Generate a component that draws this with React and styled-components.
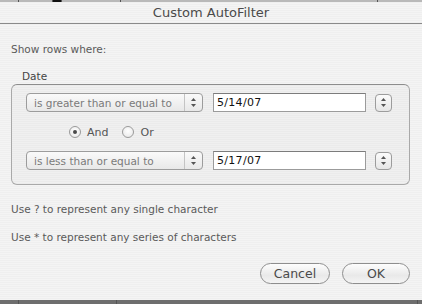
import React from 'react';
import styled, { createGlobalStyle } from 'styled-components';

const Global = createGlobalStyle`
  html, body { margin: 0; padding: 0; background: #6b6b6b; }
  body { font-family: "DejaVu Sans", "Liberation Sans", sans-serif; }
`;

const Screen = styled.div`
  width: 422px;
  height: 304px;
  overflow: hidden;
  display: flex;
  flex-direction: column;
  background: #6b6b6b;
`;

/* sheet rows peeking out behind the dialog */
const Behind = styled.div`
  height: 2px;
  flex: none;
  display: flex;
  background: #b9b9b9;
`;

const Cell = styled.div`
  width: ${p => p.w}px;
  flex: none;
  background: ${p => p.dark ? '#111' : 'transparent'};
  border-right: 1px solid #555;
`;

const Sheet = styled.div`
  flex: 1;
  display: flex;
  flex-direction: column;
  background: repeating-linear-gradient(#efefef 0 1px, #f4f4f4 1px 2px);
`;

const TitleBar = styled.div`
  height: 21px;
  flex: none;
  display: flex;
  align-items: center;
  justify-content: center;
  border-bottom: 1px solid #8a8a8a;
  font-size: 13px;
  color: #4a4a4a;
`;

const Body = styled.div`
  flex: 1;
  display: flex;
  flex-direction: column;
  padding: 19px 11px 0 11px;
  font-size: 10.5px;
  color: #5a5a5a;
`;

const Note = styled.div`
  margin-top: ${p => p.mt || 0}px;
  height: 13px;
  line-height: 13px;
`;

const Legend = styled.div`
  margin: 14px 0 1px 11px;
  height: 13px;
  line-height: 13px;
  color: #444;
`;

const Group = styled.div`
  width: 399px;
  height: 101px;
  box-sizing: border-box;
  border: 1px solid #a9a9a9;
  border-top-color: #8d8d8d;
  border-radius: 6px;
  padding: 8px 0 0 14px;
  display: flex;
  flex-direction: column;
  background: repeating-linear-gradient(#ebebeb 0 1px, #f0f0f0 1px 2px);
`;

const Row = styled.div`
  display: flex;
  align-items: center;
  height: 19px;
`;

const Popup = styled.div`
  width: 177px;
  height: 19px;
  box-sizing: border-box;
  border: 1px solid #9c9c9c;
  border-radius: 4px;
  background: linear-gradient(#fafafa, #e8e8e8);
  display: flex;
  align-items: center;
  color: #7a7a7a;
  font-size: 10.5px;
`;

const PopupLabel = styled.span`
  flex: 1;
  padding-left: 7px;
  white-space: nowrap;
`;

const ArrowBox = styled.div`
  width: 17px;
  height: 100%;
  border-left: 1px solid #c4c4c4;
  display: flex;
  align-items: center;
  justify-content: center;
`;

const Field = styled.div`
  width: 153px;
  height: 19px;
  box-sizing: border-box;
  margin-left: 10px;
  background: #fff;
  border: 1px solid #9b9b9b;
  border-top-color: #7c7c7c;
  display: flex;
  align-items: center;
  padding-left: 3px;
  font-size: 11px;
  color: #111;
  letter-spacing: 0.3px;
`;

const Stepper = styled.div`
  width: 17px;
  height: 18px;
  box-sizing: border-box;
  margin-left: 9px;
  border: 1px solid #9c9c9c;
  border-radius: 4px;
  background: linear-gradient(#fbfbfb, #e6e6e6);
  display: flex;
  align-items: center;
  justify-content: center;
`;

const Radios = styled.div`
  display: flex;
  align-items: center;
  height: 18px;
  margin: 11px 0 10px 43px;
  font-size: 11px;
  color: #555;
`;

const Radio = styled.label`
  display: flex;
  align-items: center;
  margin-right: 14px;
`;

const Dot = styled.span`
  width: 12px;
  height: 12px;
  box-sizing: border-box;
  border-radius: 50%;
  border: 1px solid #9a9a9a;
  background: radial-gradient(circle at 50% 40%, #ffffff, #e4e4e4);
  display: flex;
  align-items: center;
  justify-content: center;
  margin-right: 6px;
  &::after {
    content: '';
    width: 4px;
    height: 4px;
    border-radius: 50%;
    background: ${p => p.on ? '#4a4a4a' : 'transparent'};
  }
`;

const Buttons = styled.div`
  display: flex;
  justify-content: flex-end;
  gap: 12px;
  margin: 19px 1px 0 0;
`;

const Button = styled.button`
  width: ${p => p.w}px;
  height: 21px;
  box-sizing: border-box;
  border: 1px solid #8e8e8e;
  border-radius: 11px;
  background: linear-gradient(#fdfdfd, #e9e9e9 60%, #f4f4f4);
  font-family: inherit;
  font-size: 12.5px;
  color: #4a4a4a;
  padding: 0;
  line-height: 19px;
`;

const Bottom = styled.div`
  height: 4px;
  flex: none;
  display: flex;
  background: #6e6e6e;
`;

const Arrows = () => (
  <svg width="7" height="11" viewBox="0 0 7 11">
    <path d="M3.5 1 L6 4 L1 4 Z" fill="#555" />
    <path d="M3.5 10 L6 7 L1 7 Z" fill="#555" />
  </svg>
);

const Condition = ({ op, value }) => (
  <Row>
    <Popup>
      <PopupLabel>{op}</PopupLabel>
      <ArrowBox><Arrows /></ArrowBox>
    </Popup>
    <Field>{value}</Field>
    <Stepper><Arrows /></Stepper>
  </Row>
);

export default function App() {
  return (
    <Screen>
      <Global />
      <Behind>
        <Cell w={18} />
        <Cell w={33} />
        <Cell w={8} dark />
        <Cell w={58} />
        <Cell w={256} />
      </Behind>
      <Sheet>
        <TitleBar>Custom AutoFilter</TitleBar>
        <Body>
          <Note>Show rows where:</Note>
          <Legend>Date</Legend>
          <Group>
            <Condition op="is greater than or equal to" value="5/14/07" />
            <Radios>
              <Radio><Dot on />And</Radio>
              <Radio><Dot />Or</Radio>
            </Radios>
            <Condition op="is less than or equal to" value="5/17/07" />
          </Group>
          <Note mt={18}>Use ? to represent any single character</Note>
          <Note mt={15}>Use * to represent any series of characters</Note>
          <Buttons>
            <Button w={70}>Cancel</Button>
            <Button w={68}>OK</Button>
          </Buttons>
        </Body>
      </Sheet>
      <Bottom>
        <Cell w={18} />
        <Cell w={97} />
        <Cell w={300} />
      </Bottom>
    </Screen>
  );
}
